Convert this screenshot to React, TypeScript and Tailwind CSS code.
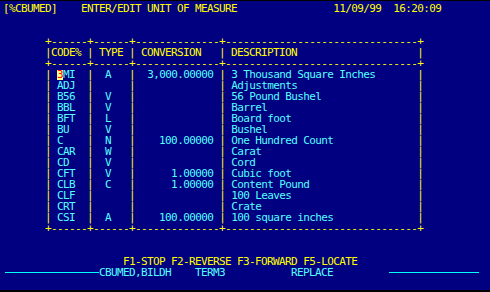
import React from 'react';

// terminal-style unit of measure screen, 80 cols x 25 rows, 6x11 cells
const Y = 'text-[#ffff00]';
const C = 'text-[#55ffff]';

type Unit = { code: string; type: string; conv: string; desc: string };

const units: Unit[] = [
  { code: '3MI', type: 'A', conv: '3,000.00000', desc: '3 Thousand Square Inches' },
  { code: 'ADJ', type: '', conv: '', desc: 'Adjustments' },
  { code: 'B56', type: 'V', conv: '', desc: '56 Pound Bushel' },
  { code: 'BBL', type: 'V', conv: '', desc: 'Barrel' },
  { code: 'BFT', type: 'L', conv: '', desc: 'Board foot' },
  { code: 'BU', type: 'V', conv: '', desc: 'Bushel' },
  { code: 'C', type: 'N', conv: '100.00000', desc: 'One Hundred Count' },
  { code: 'CAR', type: 'W', conv: '', desc: 'Carat' },
  { code: 'CD', type: 'V', conv: '', desc: 'Cord' },
  { code: 'CFT', type: 'V', conv: '1.00000', desc: 'Cubic foot' },
  { code: 'CLB', type: 'C', conv: '1.00000', desc: 'Content Pound' },
  { code: 'CLF', type: '', conv: '', desc: '100 Leaves' },
  { code: 'CRT', type: '', conv: '', desc: 'Crate' },
  { code: 'CSI', type: 'A', conv: '100.00000', desc: '100 square inches' },
];

const INDENT = ' '.repeat(7);
const BORDER = '+' + '-'.repeat(6) + '+' + '-'.repeat(6) + '+' + '-'.repeat(14) + '+' + '-'.repeat(32) + '+';

const Row = ({ children }: { children?: React.ReactNode }) => (
  <div className="h-[11px] leading-[11px] whitespace-pre">{children}</div>
);

const UnitRow = ({ u, cursor }: { u: Unit; cursor?: boolean }) => (
  <Row>
    <span className={Y}>{INDENT}|</span>
    {cursor ? (
      <span className={C}>
        {' '}
        <span className="inline-block align-top w-[6px] h-[10px] mt-px leading-[9px] bg-[#ffff80] text-[#ff0000]">
          {u.code[0]}
        </span>
        {u.code.slice(1).padEnd(4)}
      </span>
    ) : (
      <span className={C}>{' ' + u.code.padEnd(5)}</span>
    )}
    <span className={Y}>|</span>
    <span className={C}>{'  ' + u.type.padEnd(4)}</span>
    <span className={Y}>|</span>
    <span className={C}>{u.conv.padStart(13) + ' '}</span>
    <span className={Y}>|</span>
    <span className={C}>{' ' + u.desc.padEnd(31)}</span>
    <span className={Y}>|</span>
  </Row>
);

export default function App() {
  return (
    <div className="w-[490px] h-[292px] bg-black pt-px overflow-hidden">
      <div className="h-[289px] bg-[#000080] pt-[2px] pl-[3px] font-['DejaVu_Sans_Mono',monospace] text-[11px] tracking-[-0.62px]">
        <Row>
          <span className={Y}>
            {'[%CBUMED]    ENTER/EDIT UNIT OF MEASURE' + ' '.repeat(16) + '11/09/99  16:20:09'}
          </span>
        </Row>
        <Row />
        <Row />
        <Row>
          <span className={Y}>{INDENT + BORDER}</span>
        </Row>
        <Row>
          <span className={Y}>
            {INDENT + '|CODE% | TYPE | CONVERSION   | ' + 'DESCRIPTION'.padEnd(31) + '|'}
          </span>
        </Row>
        <Row>
          <span className={Y}>{INDENT + BORDER}</span>
        </Row>
        {units.map((u, i) => (
          <UnitRow key={u.code} u={u} cursor={i === 0} />
        ))}
        <Row>
          <span className={Y}>{INDENT + BORDER}</span>
        </Row>
        <Row />
        <Row />
        <Row>
          <span className={Y}>{' '.repeat(20) + 'F1-STOP F2-REVERSE F3-FORWARD F5-LOCATE'}</span>
        </Row>
        <div className="h-[11px] leading-[11px] whitespace-pre flex items-center">
          <div className="w-[96px] pl-[2px]">
            <div className="h-px bg-[#00ffff]" />
          </div>
          <span className={C}>{'CBUMED,BILDH    TERM3' + ' '.repeat(11) + 'REPLACE' + ' '.repeat(9)}</span>
          <div className="w-[92px] pl-[2px]">
            <div className="h-px bg-[#00ffff]" />
          </div>
        </div>
      </div>
    </div>
  );
}
